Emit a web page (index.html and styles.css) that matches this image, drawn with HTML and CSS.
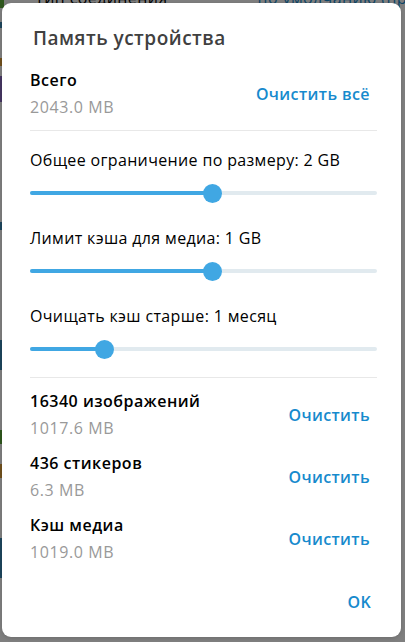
FILE: index.html
```html
<!DOCTYPE html>
<html lang="ru">
<head>
<meta charset="utf-8">
<title>Память устройства</title>
<link rel="stylesheet" href="styles.css">
</head>
<body>
<div class="page">
  <div class="bg-row">
    <span class="bg-label">Тип соединения</span>
    <span class="bg-value">по умолчанию (прокси)</span>
  </div>
  <div class="bg-strip">
    <span class="seg seg-green"></span>
    <span class="seg seg-blue"></span>
    <span class="seg seg-orange"></span>
    <span class="seg seg-purple"></span>
    <span class="seg seg-blue2"></span>
    <span class="seg seg-teal"></span>
    <span class="seg seg-green2"></span>
    <span class="seg seg-orange2"></span>
    <span class="seg seg-blue3"></span>
  </div>
</div>
<div class="layer">
  <div class="box">
    <h1 class="box-title">Память устройства</h1>

    <div class="row row-total">
      <div class="row-text">
        <div class="row-name">Всего</div>
        <div class="row-size">2043.0 MB</div>
      </div>
      <button class="link-btn">Очистить всё</button>
    </div>

    <div class="divider"></div>

    <div class="setting">
      <div class="setting-label">Общее ограничение по размеру: 2 GB</div>
      <div class="slider" style="--v: 52.6%"><div class="track"><div class="fill"></div><div class="thumb"></div></div></div>
    </div>
    <div class="setting">
      <div class="setting-label">Лимит кэша для медиа: 1 GB</div>
      <div class="slider" style="--v: 52.6%"><div class="track"><div class="fill"></div><div class="thumb"></div></div></div>
    </div>
    <div class="setting">
      <div class="setting-label">Очищать кэш старше: 1 месяц</div>
      <div class="slider" style="--v: 21.6%"><div class="track"><div class="fill"></div><div class="thumb"></div></div></div>
    </div>

    <div class="divider divider-2"></div>

    <div class="rows">
      <div class="row">
        <div class="row-text">
          <div class="row-name">16340 изображений</div>
          <div class="row-size">1017.6 MB</div>
        </div>
        <button class="link-btn">Очистить</button>
      </div>
      <div class="row">
        <div class="row-text">
          <div class="row-name">436 стикеров</div>
          <div class="row-size">6.3 MB</div>
        </div>
        <button class="link-btn">Очистить</button>
      </div>
      <div class="row">
        <div class="row-text">
          <div class="row-name">Кэш медиа</div>
          <div class="row-size">1019.0 MB</div>
        </div>
        <button class="link-btn">Очистить</button>
      </div>
    </div>

    <div class="box-footer">
      <button class="link-btn ok-btn">OK</button>
    </div>
  </div>
</div>
</body>
</html>
```
FILE: styles.css
```css
* { box-sizing: border-box; }
html, body { margin: 0; padding: 0; }
body {
  width: 405px;
  height: 642px;
  overflow: hidden;
  background: #ffffff;
  font-family: "Open Sans", "DejaVu Sans", sans-serif;
  color: #000;
  position: relative;
}
.page {
  width: 405px;
  height: 642px;
  position: relative;
  overflow: hidden;
}
.bg-row {
  margin-top: -12px;
  padding: 0 0 0 35px;
  display: flex;
  width: 405px;
  overflow: hidden;
  font-size: 16px;
  line-height: 20px;
  letter-spacing: 0.4px;
  white-space: nowrap;
}
.bg-label { color: #000; }
.bg-value { color: #168acd; margin-left: 90px; }
.bg-strip {
  display: flex;
  flex-direction: column;
  width: 4px;
  margin-top: 6px;
}
.seg { display: block; width: 4px; }
.seg-green { height: 8px; background: #5caf3a; margin-top: -14px; }
.seg-blue { height: 6px; background: #3a8bb8; margin-top: 14px; }
.seg-orange { height: 8px; background: #e0a13a; margin-top: 30px; }
.seg-purple { height: 26px; background: #8a6bc2; margin-top: 10px; }
.seg-blue2 { height: 8px; background: #3a8bb8; margin-top: 120px; }
.seg-teal { height: 30px; background: #3a8bb8; margin-top: 110px; }
.seg-green2 { height: 14px; background: #5caf3a; margin-top: 60px; }
.seg-orange2 { height: 14px; background: #e0a13a; margin-top: 20px; }
.seg-blue3 { height: 40px; background: #3a8bb8; margin-top: 60px; }

.layer {
  position: absolute;
  inset: 0;
  background: rgba(0, 0, 0, 0.5);
  padding: 3px 4px 5px 2px;
}
.box {
  width: 399px;
  height: 634px;
  background: #ffffff;
  border-radius: 9px;
  padding: 23px 24px 25px 28px;
  display: flex;
  flex-direction: column;
  box-shadow: 0 1px 4px rgba(0, 0, 0, 0.15);
}
.box-title {
  margin: 0 0 20px 3px;
  font-size: 19px;
  line-height: 24px;
  font-weight: 600;
  letter-spacing: 0.5px;
  color: #404040;
}
.row {
  display: flex;
  align-items: center;
  justify-content: space-between;
}
.row-name {
  font-size: 16px;
  line-height: 20px;
  font-weight: 600;
  letter-spacing: 0.5px;
  color: #000;
}
.row-size {
  margin-top: 7px;
  font-size: 16px;
  line-height: 20px;
  letter-spacing: 0.6px;
  color: #999999;
}
.link-btn {
  border: 0;
  background: none;
  padding: 0 7px 0 0;
  margin: 0;
  font-family: inherit;
  font-size: 16px;
  line-height: 20px;
  font-weight: 600;
  letter-spacing: 0.4px;
  color: #168acd;
  cursor: pointer;
}
.divider {
  height: 1px;
  background: #e8e8e8;
  margin-top: 13px;
  margin-bottom: 19px;
}
.divider-2 {
  margin-top: -7px;
  margin-bottom: 13px;
}
.setting { margin-bottom: 25px; }
.setting-label {
  font-size: 16px;
  line-height: 20px;
  letter-spacing: 0.35px;
  color: #000;
}
.slider {
  margin-top: 13px;
  height: 20px;
  display: flex;
  align-items: center;
}
.track {
  position: relative;
  width: 100%;
  height: 4px;
  border-radius: 2px;
  background: #e1eaef;
}
.fill {
  width: var(--v);
  height: 4px;
  border-radius: 2px;
  background: #40a7e3;
}
.thumb {
  position: absolute;
  top: 50%;
  left: var(--v);
  width: 19px;
  height: 19px;
  margin: -9.5px 0 0 -9.5px;
  border-radius: 50%;
  background: #40a7e3;
}
.rows {
  display: flex;
  flex-direction: column;
  gap: 15px;
}
.box-footer {
  margin-top: auto;
  display: flex;
  justify-content: flex-end;
}
.ok-btn { padding-right: 6px; }
```
